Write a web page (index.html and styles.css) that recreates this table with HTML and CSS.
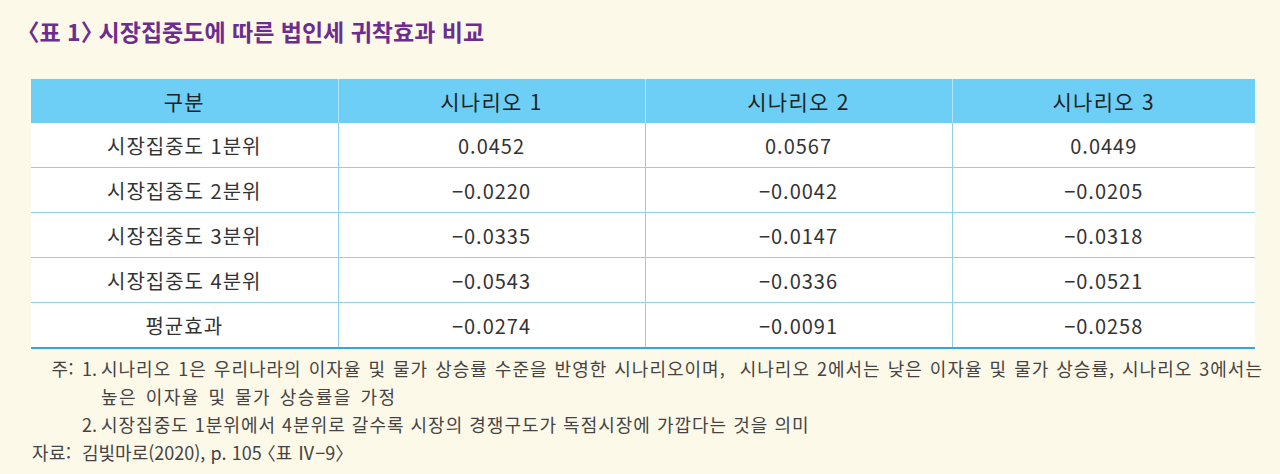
FILE: index.html
```html
<!DOCTYPE html>
<html lang="ko">
<head>
<meta charset="utf-8">
<title>표 1 시장집중도에 따른 법인세 귀착효과 비교</title>
<link rel="stylesheet" href="styles.css">
</head>
<body>
<div class="page">
  <h1 class="title"><span class="br">〈</span>표 1<span class="br">〉</span> 시장집중도에 따른 법인세 귀착효과 비교</h1>
  <table class="data">
    <colgroup>
      <col class="c1"><col class="c2"><col class="c3"><col class="c4">
    </colgroup>
    <thead>
      <tr><th>구분</th><th>시나리오 1</th><th>시나리오 2</th><th>시나리오 3</th></tr>
    </thead>
    <tbody>
      <tr><td>시장집중도 1분위</td><td>0.0452</td><td>0.0567</td><td>0.0449</td></tr>
      <tr><td>시장집중도 2분위</td><td>−0.0220</td><td>−0.0042</td><td>−0.0205</td></tr>
      <tr><td>시장집중도 3분위</td><td>−0.0335</td><td>−0.0147</td><td>−0.0318</td></tr>
      <tr><td>시장집중도 4분위</td><td>−0.0543</td><td>−0.0336</td><td>−0.0521</td></tr>
      <tr><td>평균효과</td><td>−0.0274</td><td>−0.0091</td><td>−0.0258</td></tr>
    </tbody>
  </table>
  <div class="notes">
    <div class="label">주:</div>
    <div class="items">
      <div class="item">
        <span class="num">1.</span>
        <div class="text">
          <span class="line-just">시나리오 1은 우리나라의 이자율 및 물가 상승률 수준을 반영한 시나리오이며,&nbsp; 시나리오 2에서는 낮은 이자율 및 물가 상승률, 시나리오 3에서는</span>
          <span class="line wide">높은 이자율 및 물가 상승률을 가정</span>
        </div>
      </div>
      <div class="item">
        <span class="num">2.</span>
        <div class="text"><span class="line">시장집중도 1분위에서 4분위로 갈수록 시장의 경쟁구도가 독점시장에 가깝다는 것을 의미</span></div>
      </div>
    </div>
    <div class="label src">자료:</div>
    <div class="source">김빛마로(2020), p. 105 <span class="br">〈</span>표 Ⅳ−9<span class="br">〉</span></div>
  </div>
</div>
</body>
</html>
```

FILE: styles.css
```css
html, body {
  margin: 0;
  padding: 0;
  background: #fdf9e9;
}
body {
  font-family: "Noto Sans CJK KR", "Noto Sans", sans-serif;
  color: #333;
}
.page {
  padding: 15px 25px 0 31px;
  width: 1224px;
}
.title {
  margin: 0 0 0 -3px;
  font-size: 23px;
  line-height: 32px;
  font-weight: 700;
  color: #6c2d8f;
  letter-spacing: 0;
  height: 32px;
}
.br {
  font-feature-settings: "halt" 1;
}
.data {
  margin-top: 32px;
  width: 1224px;
  border-collapse: collapse;
  table-layout: fixed;
  background: #fff;
}
.c1, .c2, .c3 { width: 307px; }
.c4 { width: 303px; }
.data th {
  background: #6dcff6;
  color: #222;
  font-weight: 400;
  font-size: 21px;
  height: 44px;
  padding: 0;
  text-align: center;
  border-left: 1px solid #b3e4f7;
  letter-spacing: 1.3px;
}
.data th:first-child { border-left: none; }
.data td {
  height: 44px;
  padding: 0;
  text-align: center;
  font-size: 20px;
  color: #333;
  border-top: 1px solid #8fd0ea;
  border-left: 1px solid #8fd0ea;
  letter-spacing: 1px;
}
.data td:first-child { border-left: none; }
.data tbody tr:first-child td { border-top: none; }
.data tbody tr:last-child td { border-bottom: 2px solid #35a7dc; }
.notes {
  display: grid;
  grid-template-columns: 43px 1fr;
  column-gap: 8px;
  margin-top: 5px;
  font-size: 18px;
  line-height: 28px;
  color: #444;
  letter-spacing: 1px;
}
.label {
  text-align: right;
  letter-spacing: 0.5px;
}
.label.src {
  text-align: left;
  margin-left: 1px;
}
.items {
  display: flex;
  flex-direction: column;
}
.item {
  display: flex;
}
.num {
  width: 19px;
  flex: none;
  letter-spacing: 0;
}
.text {
  flex: 1;
  display: flex;
  flex-direction: column;
}
.line-just {
  display: block;
  text-align: justify;
  text-align-last: justify;
  margin-right: -8px;
}
.line { display: block; }
.line.wide { letter-spacing: 1.5px; word-spacing: 2px; }
.source {
  letter-spacing: 0;
}
```
